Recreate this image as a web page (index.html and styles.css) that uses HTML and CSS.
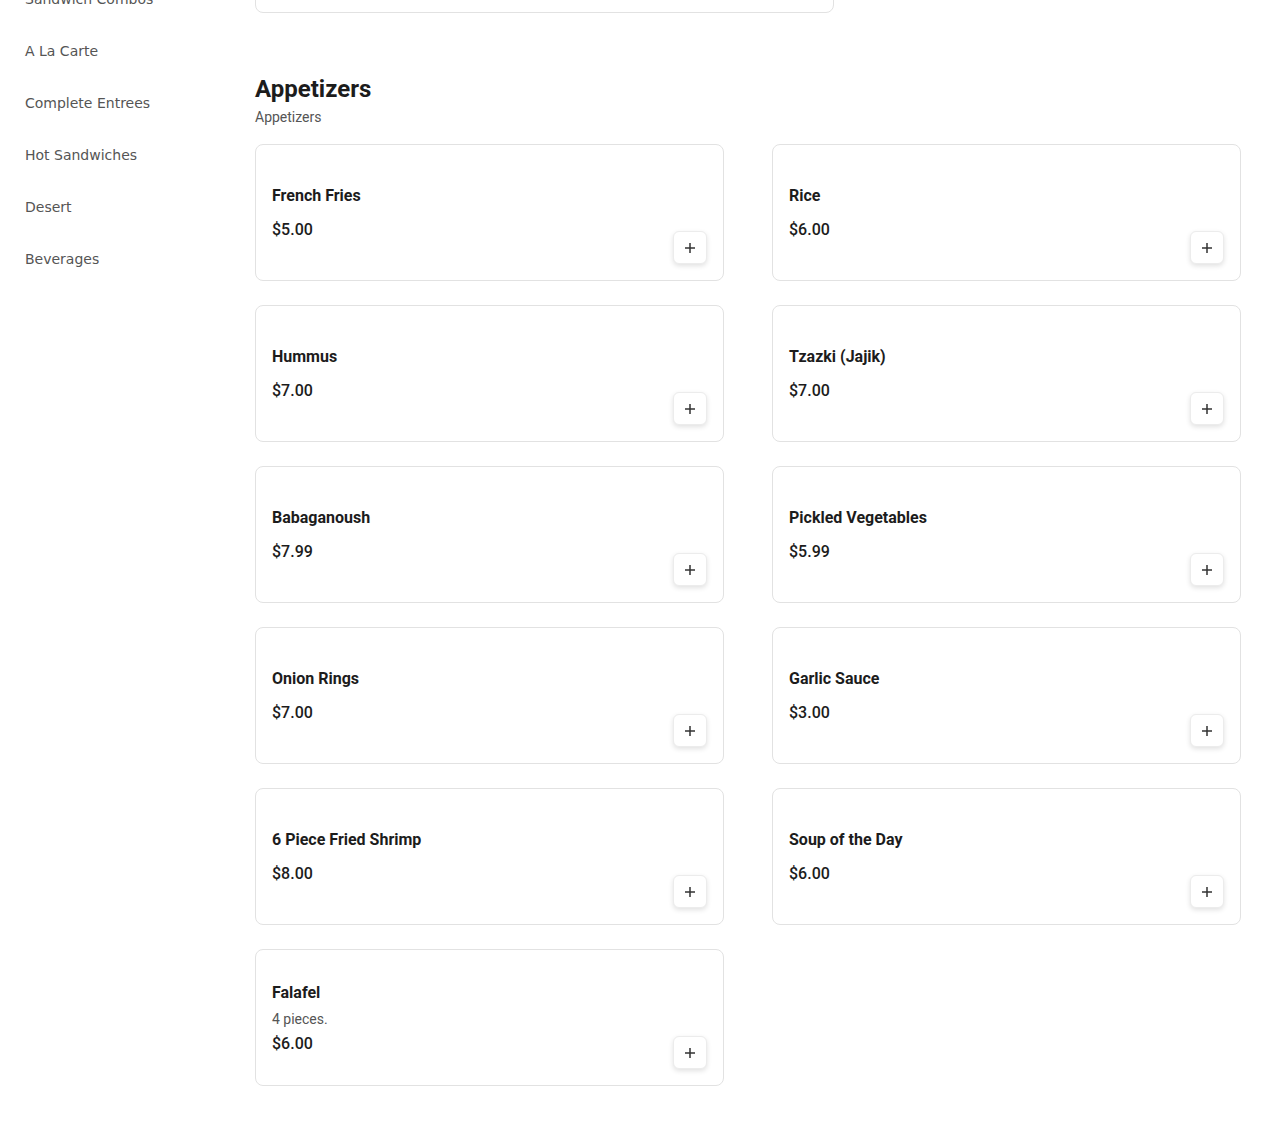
FILE: index.html
```html
<!DOCTYPE html>
<html lang="en">
<head>
<meta charset="utf-8">
<title>Menu</title>
<link rel="stylesheet" href="styles.css">
</head>
<body>
<div class="page">
  <nav class="sidebar">
    <a class="nav-item">Sandwich Combos</a>
    <a class="nav-item">A La Carte</a>
    <a class="nav-item">Complete Entrees</a>
    <a class="nav-item">Hot Sandwiches</a>
    <a class="nav-item">Desert</a>
    <a class="nav-item">Beverages</a>
  </nav>
  <main class="main">
    <div class="prev-card"></div>
    <section class="section">
      <h2 class="section-title">Appetizers</h2>
      <p class="section-sub">Appetizers</p>
      <div class="grid">
        <div class="card"><div class="info"><div class="name">French Fries</div><div class="price">$5.00</div></div><button class="add"><svg viewBox="0 0 12 12" width="12" height="12"><path d="M6 1v10M1 6h10"/></svg></button></div>
        <div class="card"><div class="info"><div class="name">Rice</div><div class="price">$6.00</div></div><button class="add"><svg viewBox="0 0 12 12" width="12" height="12"><path d="M6 1v10M1 6h10"/></svg></button></div>
        <div class="card"><div class="info"><div class="name">Hummus</div><div class="price">$7.00</div></div><button class="add"><svg viewBox="0 0 12 12" width="12" height="12"><path d="M6 1v10M1 6h10"/></svg></button></div>
        <div class="card"><div class="info"><div class="name">Tzazki (Jajik)</div><div class="price">$7.00</div></div><button class="add"><svg viewBox="0 0 12 12" width="12" height="12"><path d="M6 1v10M1 6h10"/></svg></button></div>
        <div class="card"><div class="info"><div class="name">Babaganoush</div><div class="price">$7.99</div></div><button class="add"><svg viewBox="0 0 12 12" width="12" height="12"><path d="M6 1v10M1 6h10"/></svg></button></div>
        <div class="card"><div class="info"><div class="name">Pickled Vegetables</div><div class="price">$5.99</div></div><button class="add"><svg viewBox="0 0 12 12" width="12" height="12"><path d="M6 1v10M1 6h10"/></svg></button></div>
        <div class="card"><div class="info"><div class="name">Onion Rings</div><div class="price">$7.00</div></div><button class="add"><svg viewBox="0 0 12 12" width="12" height="12"><path d="M6 1v10M1 6h10"/></svg></button></div>
        <div class="card"><div class="info"><div class="name">Garlic Sauce</div><div class="price">$3.00</div></div><button class="add"><svg viewBox="0 0 12 12" width="12" height="12"><path d="M6 1v10M1 6h10"/></svg></button></div>
        <div class="card"><div class="info"><div class="name">6 Piece Fried Shrimp</div><div class="price">$8.00</div></div><button class="add"><svg viewBox="0 0 12 12" width="12" height="12"><path d="M6 1v10M1 6h10"/></svg></button></div>
        <div class="card"><div class="info"><div class="name">Soup of the Day</div><div class="price">$6.00</div></div><button class="add"><svg viewBox="0 0 12 12" width="12" height="12"><path d="M6 1v10M1 6h10"/></svg></button></div>
        <div class="card"><div class="info"><div class="name">Falafel</div><div class="desc">4 pieces.</div><div class="price">$6.00</div></div><button class="add"><svg viewBox="0 0 12 12" width="12" height="12"><path d="M6 1v10M1 6h10"/></svg></button></div>
      </div>
    </section>
  </main>
</div>
</body>
</html>
```
FILE: styles.css
```css
* { box-sizing: border-box; }
html, body { margin: 0; padding: 0; background: #fff; }
body { font-family: Roboto, "Liberation Sans", sans-serif; color: #1c1c1c; overflow: hidden; }

.page { display: flex; align-items: flex-start; }

.sidebar {
  width: 255px;
  flex: none;
  display: flex;
  flex-direction: column;
  margin-top: -27px;
}
.nav-item {
  display: block;
  padding: 16px 25px;
  font-family: "DejaVu Sans", sans-serif;
  font-size: 14px;
  line-height: 20px;
  color: #555;
  text-decoration: none;
}

.main { width: 986px; flex: none; }

.prev-card {
  width: 579px;
  height: 60px;
  margin-top: -47px;
  border: 1px solid #e2e2e2;
  border-radius: 8px;
}

.section { padding-top: 60px; }
.section-title {
  margin: 0;
  font-size: 24px;
  line-height: 32px;
  font-weight: 700;
  color: #1c1c1c;
}
.section-sub {
  margin: 2px 0 17px;
  font-size: 14px;
  line-height: 20px;
  color: #555;
}

.grid {
  display: grid;
  grid-template-columns: 1fr 1fr;
  column-gap: 48px;
  row-gap: 24px;
}

.card {
  min-height: 137px;
  border: 1px solid #e2e2e2;
  border-radius: 8px;
  padding: 16px;
  display: flex;
  align-items: center;
  justify-content: space-between;
}
.info { display: flex; flex-direction: column; padding-top: 1px; }
.name { font-size: 16px; line-height: 24px; font-weight: 700; color: #1c1c1c; margin-bottom: 4px; }
.name + .price { margin-top: 6px; }
.desc { font-size: 14px; line-height: 20px; color: #555; margin-bottom: 3px; }
.price { font-size: 16px; line-height: 24px; font-weight: 500; color: #1c1c1c; }

.add {
  align-self: flex-end;
  width: 34px;
  height: 33px;
  padding: 0;
  border: 1px solid #ececec;
  border-radius: 6px;
  background: #fff;
  box-shadow: 0 2px 5px rgba(0,0,0,0.12);
  display: flex;
  align-items: center;
  justify-content: center;
}
.add svg { stroke: #333; stroke-width: 1.5; fill: none; }
```
